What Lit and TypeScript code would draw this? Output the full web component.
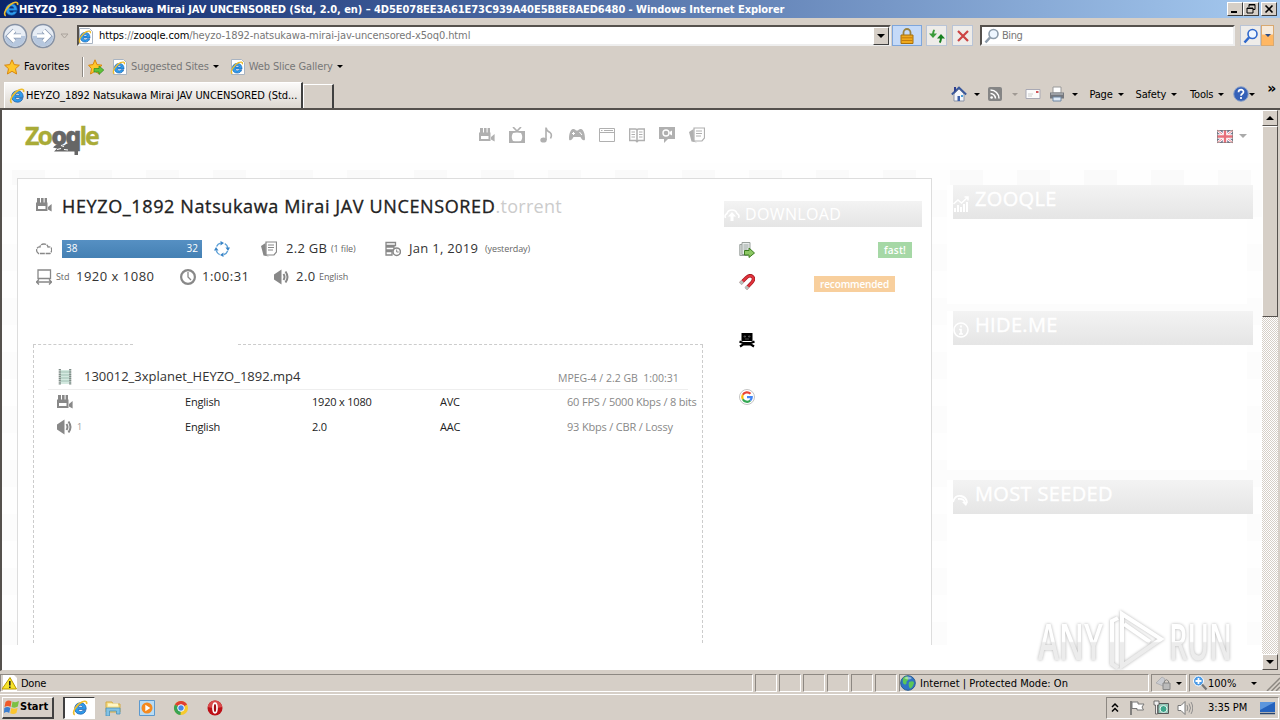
import { html, css, svg, LitElement, nothing } from 'lit';
import { customElement, property } from 'lit/decorators.js';

const ieLogo = svg`
  <path d="M14.200 9.400H6.300c.1 1.400 1 2.200 2.300 2.200 1 0 1.800-.5 2.200-1.200h3c-.8 2.500-2.800 3.800-5.300 3.800-3.600 0-5.800-2.400-5.800-5.700S5 2.800 8.500 2.800c3.600 0 5.800 2.500 5.700 6.600zM6.400 7.200h4.400c-.2-1.200-1-1.900-2.200-1.900s-2 .7-2.200 1.900z" fill="#2f9cec" stroke="#1457a8" stroke-width=".7"/>
  <path d="M2.800 14.800C-.8 13.500 4.300 4.500 10 2c3-1.300 5.400-.9 4.500 1.900" fill="none" stroke="#eebd2c" stroke-width="1.600"/>`;

const camera = svg`
  <path d="M1 1h3v5H1zM5 1h2.600v5H5zM8.600 1H11v5H8.600z" fill="currentColor"/>
  <path d="M0 5.500h11.500V14H0zM2 9v3h7.500V9z" fill="currentColor" fill-rule="evenodd"/>
  <path d="M12 10l3.600-3v7.500L12 12.500z" fill="currentColor"/>`;

const papers = svg`
  <path d="M5 1h10.500v10l-2.500 3H5z" fill="#fff" stroke="currentColor" stroke-width="1.200"/>
  <path d="M7 4h6M7 6.500h6M7 9h5" stroke="currentColor"/>
  <path d="M4.500 2L0 5l2.500 9.500L8 15.500l-3-1.500z" fill="currentColor"/>`;

const speaker = svg`
  <path d="M0 5.500L7.500.5v15L0 10.500z" fill="currentColor"/>
  <path d="M9.500 5q2 3 0 6M11.500 2.500q4 5.500 0 11" fill="none" stroke="currentColor" stroke-width="2"/>`;

const icons: Record<string, unknown> = {
  ie: ieLogo,
  iePage: svg`<path d="M1.500.5h10l3 3v12h-13z" fill="#fff" stroke="#a9b4c2"/><g transform="translate(0 2) scale(.85)">${ieLogo}</g>`,
  star: svg`<path d="M8 .8l2.200 4.800 5.200.6-3.900 3.500 1.100 5.300L8 12.300 3.400 15l1.100-5.300L.6 6.200l5.200-.6z" fill="#ffc62a" stroke="#d9870e"/>`,
  starAdd: svg`<path d="M7 .8l2 4.800 5 .6-3.700 3.500 1 5.300L7 12.300 2.500 15l1-5.300L.6 6.200l4.400-.6z" fill="#ffc62a" stroke="#d9870e"/><path d="M6 9.500h5V7l4.800 4-4.800 4.500v-2.500H6z" fill="#5fc238" stroke="#2f8a1f" stroke-width=".7"/>`,
  lock: svg`<path d="M4.500 8V4.500a3.500 3.500 0 0 1 7 0V8" fill="none" stroke="#9a8341" stroke-width="1.800"/><path d="M2 7h12v8.500H2z" fill="#efa91d" stroke="#a7700e"/><path d="M2.500 9.800h11M2.500 12.500h11" stroke="#c47c0c"/>`,
  refresh: svg`<path d="M5.500 2Q4 3 4 8" fill="none" stroke="#3a9b3a" stroke-width="2"/><path d="M0 5.500h8L4 10z" fill="#3a9b3a"/><path d="M10.500 14.500q1.500-1 1.500-6" fill="none" stroke="#17801f" stroke-width="2"/><path d="M8 10.500h8L12 6z" fill="#17801f"/>`,
  stop: svg`<path d="M3 3l10 10M13 3L3 13" stroke="#cc4444" stroke-width="2.200"/>`,
  find: svg`<circle cx="9.500" cy="6" r="4.500" fill="#eef6ff" stroke="currentColor" stroke-width="1.600"/><path d="M6 9.500L1.500 14.500" stroke="currentColor" stroke-width="2.600"/>`,
  home: svg`<path d="M3 8v7h10V8L8 3z" fill="#f4f6fa" stroke="#8b94a8"/><path d="M.8 8.500L8 1.500l7.200 7" fill="none" stroke="#39589c" stroke-width="1.800"/><path d="M3 1h2v3.500L3 6z" fill="#2f3f8e"/><path d="M6.500 10H9v5H6.500z" fill="#3c5fa8"/><path d="M10 9h2v2h-2z" fill="#4aa0d8"/>`,
  rss: svg`<rect x="1" y="1" width="14" height="14" rx="2" fill="#858585"/><circle cx="4.600" cy="11.500" r="1.300" fill="#fff"/><path d="M3.500 7.500a5 5 0 0 1 5 5M3.500 4a8.500 8.500 0 0 1 8.500 8.500" fill="none" stroke="#fff" stroke-width="1.500"/>`,
  mail: svg`<path d="M1 3.500h14v9H1z" fill="#fbfbfb" stroke="#a9a9b4"/><path d="M11 5h2.500v2H11z" fill="#d0565a"/><path d="M3 8h5M3 10h4" stroke="#ccc"/>`,
  printer: svg`<path d="M4 1h8v6H4z" fill="#fff" stroke="#999"/><path d="M1 6.500h14v6H1z" fill="#75787e"/><path d="M2 8h12" stroke="#c5c8cc"/><path d="M4 11h8v4H4z" fill="#dfeaf6" stroke="#6e87a3"/>`,
  help: svg`<circle cx="8" cy="8" r="7.300" fill="#3561b8" stroke="#8ea3c8"/><path d="M5.500 6.200C5.600 2.800 10.700 3 10.500 6c-.1 1.800-2.500 1.800-2.500 3.700M8 11v2" fill="none" stroke="#fff" stroke-width="1.700"/>`,
  camera,
  papers,
  speaker,
  tv: svg`<path d="M4 0l4 4 4-4" fill="none" stroke="currentColor" stroke-width="1.600"/><path d="M0 4h16v12H0zM4 6Q1.500 10 4 14q4 .6 8 0 2.500-4 0-8-4-.8-8 0z" fill="currentColor" fill-rule="evenodd"/>`,
  music: svg`<ellipse cx="4.500" cy="13" rx="3.200" ry="2.600" fill="currentColor"/><path d="M7 13V.5q.5 3.500 4 5 2.500 2 .5 6" fill="none" stroke="currentColor" stroke-width="1.600"/>`,
  gamepad: svg`<path d="M4 2q2-.5 3 1.500h2Q10 1.500 12 2c3 .5 4.500 7 3.800 11-2 1-3.300-1-4.300-3h-7c-1 2-2.500 4-4.300 3C-.5 9 1 2.500 4 2z" fill="currentColor"/><path d="M3 6.500h3M4.500 5v3M10.500 5l2.500 3" stroke="#fff"/>`,
  window: svg`<path d="M.5 1.500h15v13H.5zM.5 5.500h15M2 3.500h1.500M5 3.500h9" fill="none" stroke="currentColor"/>`,
  book: svg`<path d="M.6 2h5.900Q8 2 8 3.500 8 2 9.500 2h5.900v11.500h-6L8 14.800l-1.400-1.300h-6zM8 3v11" fill="none" stroke="currentColor" stroke-width="1.500"/><path d="M2.500 5H6M2.500 7.500H6M2.500 10H6M10 5h3.500M10 7.500h3.500M10 10h3.500" stroke="currentColor"/>`,
  chat: svg`<path d="M0 0h16v12H9l-4 4v-4H0z" fill="currentColor"/><circle cx="7" cy="6" r="3" fill="none" stroke="#fff" stroke-width="1.400"/><path d="M10.500 5l2.500-1.500v5l-2.500-1.500z" fill="#fff"/>`,
  flag: svg`<path d="M0 2h16v13H0z" fill="#6f7292"/><path d="M0 2l16 13M16 2L0 15" stroke="#fff" stroke-width="2.800"/><path d="M0 2l16 13M16 2L0 15" stroke="#e97d87"/><path d="M8 2v13M0 8.500h16" stroke="#fff" stroke-width="4.500"/><path d="M8 2v13M0 8.500h16" stroke="#e8707b" stroke-width="2.400"/><path d="M.5 2.500h15v12H.5z" fill="none" stroke="#777" stroke-opacity=".6"/>`,
  cloud: svg`<path d="M2.500 12.500Q-.3 10.500 1 7.500 2 5.500 4 6q.5-3 4-3 3.300 0 4 3 3-.5 3.500 1.500.7 3-1.500 5z" fill="none" stroke="currentColor" stroke-width="1.300" stroke-dasharray="5 .8"/>`,
  cycle: svg`<circle cx="8" cy="8" r="6" fill="none" stroke="#5b9fd6" stroke-width="1.400" stroke-dasharray="5 4.420" stroke-dashoffset="-2.200"/><path d="M6.500 0L10 2 6.500 4.500zM16 6.500L14 10l-2.500-3.500zM9.500 16L6 14l3.500-2.500zM0 9.500L2 6l2.500 3.500z" fill="#3984c6"/>`,
  resolution: svg`<path d="M2 1h12.500v8.500H2zM0 13h16M3 10.500L.5 13 3 15.500M13 10.500l2.500 2.500-2.500 2.500" fill="none" stroke="currentColor" stroke-width="1.300"/>`,
  clock: svg`<circle cx="8" cy="8" r="6.900" fill="#fff" stroke="currentColor" stroke-width="2.200"/><path d="M8 3v5l3 3" fill="none" stroke="currentColor" stroke-width="1.300"/>`,
  dated: svg`<path d="M1 1.500h9.500v3H1zM1 6h8v3H1zM1 10.500h6v3.500H1z" fill="none" stroke="currentColor" stroke-width="1.300"/><circle cx="11.700" cy="10.700" r="3.700" fill="#fff" stroke="currentColor" stroke-width="1.500"/><path d="M11.700 8.500v2.500h2" fill="none" stroke="currentColor"/>`,
  film: svg`<path d="M3 1h11v14H3z" fill="#d4e9e0"/><path d="M2.800 0v16M13.200 0v16" stroke="#7e8b86" stroke-width="2.200" stroke-dasharray="1.600 .6"/><path d="M4 3h8M4 6h8M4 9h8M4 12h8" stroke="#9fc0b3"/>`,
  upload: svg`<path d="M1.500 12Q0 9 3 7.500 4 4 8 4t5 3.500q3 1.500 1.500 4.500" fill="none" stroke="#fff" stroke-width="1.600"/><path d="M8 6l4 4.500H9.500V15h-3v-4.500H4z" fill="#fff"/>`,
  file: svg`<path d="M.8 2.500h8v11h-8z" fill="#d8dcda" stroke="#99a09c"/><path d="M3 .5h8v12H3z" fill="#e9eceb" stroke="#9aa19d"/><path d="M4.500 3h5M4.500 5h5M4.500 7h4" stroke="#9aa5a0"/><path d="M5.500 8.500H10V6l5.500 5-5.500 4.500V13H5.500z" fill="#8cc763" stroke="#3c7d21"/>`,
  magnet: svg`<path d="M1.500 9.500L7.500 3.500q3.500-3.200 6-.8 2.300 2.500-.8 6l-5.700 6" fill="none" stroke="#a3161d" stroke-width="3.400"/><path d="M1.500 9.500L7.500 3.500q3.500-3.200 6-.8 2.300 2.500-.8 6l-5.700 6" fill="none" stroke="#e2343d" stroke-width="2"/><path d="M1.200 9.800l2.500-2.500M6.700 15l2.300-2.400" stroke="#b9c1bd" stroke-width="3.400"/>`,
  pirate: svg`<path d="M2.500 1h11v8h-11z" fill="#000"/><path d="M5 4h1.500v1H5zM9.500 4H11v1H9.500zM6 7h4" stroke="#777" stroke-width=".6"/><path d="M.5 9.500L4 11h8l3.500-1.500M1 14.500l3-2h8l3 2" fill="none" stroke="#000" stroke-width="2.200"/>`,
  google: svg`<circle cx="8" cy="8" r="7.500" fill="#fff" stroke="#c5c5c5"/><g fill="none" stroke-width="2.200"><path d="M11.500 4.800A4.800 4.800 0 0 0 3.800 5.800" stroke="#ea4335"/><path d="M3.800 5.800a4.800 4.800 0 0 0 0 4.400" stroke="#fbbc05"/><path d="M3.800 10.200a4.800 4.800 0 0 0 7.500 1.300" stroke="#34a853"/><path d="M11.300 11.500Q12.700 10 12.700 8.200H8" stroke="#4285f4"/></g>`,
  chart: svg`<path d="M.5 8L5 4l3.500 3L15 1M11.500 1H15v3.500" fill="none" stroke="#fff" stroke-width="1.500"/><path d="M2 16v-4M5 16V9M8 16v-5M11 16V8M14 16V6" stroke="#fff" stroke-width="2"/>`,
  info: svg`<circle cx="8" cy="8" r="7" fill="none" stroke="#fff" stroke-width="1.600"/><path d="M8 3.500v2M6 7.500h2V12M6 12h4" fill="none" stroke="#fff" stroke-width="1.700"/>`,
  trend: svg`<path d="M0 11Q2 4 8 5q5 1 6 6M5 8q6-1 7 4" fill="none" stroke="#fff" stroke-width="1.800"/><path d="M9 11h6l-2 4z" fill="#fff"/>`,
  warning: svg`<path d="M1 0h11l3 3v13H1z" fill="#fff"/><path d="M8 2.500l6.500 11.500H0z" fill="#f7e32a" stroke="#ba9800"/><path d="M7.800 6v4.500M7.800 11.500V13" stroke="#222" stroke-width="1.600"/>`,
  globe: svg`<circle cx="8" cy="8" r="7.300" fill="#2f74c4" stroke="#275c94"/><path d="M3 3Q7 0 8 2.500 9 5 6.500 6.500 7 10 4.500 9.500 2 8.500 3 3zM9 7q5-2 5 1-1.500 5-4 5.500Q8 11 9 7z" fill="#5bc656"/><path d="M4 3q4-3 8 0-3 3-8 0z" fill="#fff" fill-opacity=".45"/>`,
  protect: svg`<path d="M0 8l6-6 3 2-2 7z" fill="#c9cbd0" stroke="#a5a6aa" stroke-width=".7"/><path d="M7 8h7v6.500H7z" fill="#bbb" stroke="#888"/><path d="M8.500 8V6q2-2.500 4 0v2" fill="none" stroke="#888"/>`,
  zoomIn: svg`<circle cx="6.500" cy="6" r="5" fill="#4c9be6" stroke="#fff"/><path d="M6.500 3v6M3.500 6h6" stroke="#fff" stroke-width="1.800"/><path d="M10 9.500l4.500 5" stroke="#777" stroke-width="2.200"/>`,
  windows: svg`<path d="M1.500 3Q4.500.5 7.500 2.500L6.500 8Q4 6 .5 8z" fill="#ef5a2a"/><path d="M8.500 2.500q3 1.500 6.500-.5l-1.200 5.500Q11 9.500 7.500 8z" fill="#7cc043"/><path d="M.3 9q3.200-2 6 0L5.200 14q-2.500-2-5.200 0z" fill="#3b7ed0"/><path d="M7.300 9q3 1.500 6.300 0l-1.200 5q-3 2-6.200.3z" fill="#fbc52d"/>`,
  explorer: svg`<path d="M1 2h6l1 2h7v8H1z" fill="#f6dd83" stroke="#d3aa45"/><path d="M3 3.500h10v3H3z" fill="#fff6c5"/><path d="M1 8h14v6h-3.500v-3h-7v5H1z" fill="#82c2e4" stroke="#4a93bd" stroke-width=".8"/>`,
  player: svg`<path d="M.5.500h15v15H.5z" fill="#b9dcf4" stroke="#5c99ce"/><circle cx="8" cy="8" r="5.500" fill="#f58a1f"/><path d="M6.300 4.800v6.400l5-3.200z" fill="#fff"/>`,
  chrome: svg`<circle cx="8" cy="8" r="7" fill="#f7ca2c"/><path d="M8 8L1.900 4.500a7 7 0 0 1 12.200 0z" fill="#df3f33"/><path d="M8 8L1.900 4.500A7 7 0 0 0 7.500 15z" fill="#39a352"/><circle cx="8" cy="8" r="3.300" fill="#4688e8" stroke="#fff"/>`,
  opera: svg`<circle cx="8" cy="8" r="7.500" fill="#bd1017"/><path d="M8 .5A7.500 7.500 0 0 1 15.300 7Q8 9 .7 7A7.500 7.500 0 0 1 8 .5z" fill="#d84b4b"/><ellipse cx="8" cy="8" rx="2" ry="4.800" fill="#a00c12" stroke="#fff" stroke-width="1.700"/>`,
  pennant: svg`<path d="M2 1v14" stroke="#666" stroke-width="1.500"/><path d="M3 2h6v2h6l-2 3 1.500 3H8V8.500H3z" fill="#fff" stroke="#777"/>`,
  network: svg`<path d="M5 3.500h10.500v10H5z" fill="#8fc4b5" stroke="#555"/><circle cx="10.500" cy="9" r="3.500" fill="#3ca58a" stroke="#e6f3ee"/><path d="M1 1h5v4H4.500v9H2.500V5H1z" fill="#eee" stroke="#555" stroke-width=".8"/>`,
  volume: svg`<path d="M1 5.500h3l4-4v13l-4-4H1z" fill="#fff" stroke="#777"/><path d="M10 5q1.500 3 0 6M12 3.500q3 4.500 0 9M14 2q3.500 6 0 12" fill="none" stroke="#888" stroke-width=".9"/>`,
  desktop: svg`<path d="M1 2h15v10H1z" fill="#2462bd"/><path d="M1 2h15L1 10z" fill="#5c96dd"/><path d="M1 13.500h15" stroke="#27446f" stroke-width="1.500"/>`,
  chevrons: svg`<path d="M5 7l3-3 3 3M5 11.500l3-3 3 3" fill="none" stroke="#000" stroke-width="1.500"/>`,
};

@customElement('ui-icon')
export class UiIcon extends LitElement {

  static styles = [css`
    :host {
      display: block;
      flex: none;
      width: 16px;
      height: 16px;
    }

    svg {
      display: block;
      width: 100%;
      height: 100%;
    }
  `]

  @property({ type: String })
  name = 'ie';

  render() {
    return html`<svg viewBox="0 0 16 16">${icons[this.name]}</svg>`;
  }
}

@customElement('browser-chrome')
export class BrowserChrome extends LitElement {

  static styles = [css`
    :host {
      display: block;
      height: 110px;
      box-sizing: border-box;
      border-bottom: 2px solid #55514d;
      background: #d6cfc7;
      color: #000;
      font: 11px/14px "DejaVu Sans Condensed", "DejaVu Sans", sans-serif;
      font-stretch: condensed;
      letter-spacing: -.3px;
      white-space: nowrap;
    }

    .row {
      display: flex;
      align-items: center;
    }

    .title {
      height: 18px;
      padding: 0 3px;
      background: linear-gradient(to right, #0a246a, #a6caf0);
      color: #fff;
      font-weight: bold;
      letter-spacing: -.05px;
    }

    .title span {
      flex: 1;
      margin-left: 0;
      padding-top: 1px;
    }

    .button {
      box-sizing: border-box;
      width: 16px;
      height: 14px;
      border: 1px solid;
      border-color: #fff #404040 #404040 #fff;
      background: #d6cfc7;
    }

    .button.close {
      margin-left: 2px;
    }

    .button svg {
      display: block;
    }

    .address {
      height: 35px;
    }

    .nav {
      width: 26px;
      height: 26px;
      margin-left: 2px;
    }

    .caret {
      width: 0;
      height: 0;
      border: 3px solid transparent;
      border-top-color: #000;
      border-bottom: 0;
    }

    .caret.dim {
      border-top-color: #a09a94;
    }

    .field {
      display: flex;
      align-items: center;
      box-sizing: border-box;
      height: 21px;
      border: 2px solid;
      border-color: #55514d #eee #eee #55514d;
      background: #fff;
      color: #777;
    }

    .url {
      width: 814px;
      margin-left: 7px;
    }

    .url ui-icon {
      margin-left: -1px;
    }

    .url span {
      flex: 1;
      margin: 1px 0 0 5px;
      letter-spacing: -.11px;
    }

    .url b {
      color: #000;
      font-weight: normal;
    }

    .drop {
      display: flex;
      align-items: center;
      justify-content: center;
      width: 14px;
      height: 16px;
      border: 1px solid;
      border-color: #fff #404040 #404040 #fff;
      background: #d6cfc7;
    }

    .drop .caret {
      border-width: 4px 4px 0;
    }

    .tool {
      display: flex;
      align-items: center;
      justify-content: center;
      box-sizing: border-box;
      width: 21px;
      height: 21px;
      border: 1px solid #b9c4d6;
      background: #eeece9;
    }

    .tool.locked {
      width: 30px;
      margin: 0 4px 0 1px;
      border-color: #7ea6dc;
      background: #c5daf8;
    }

    .tool.stop {
      margin-left: 5px;
    }

    .search {
      width: 255px;
      margin-left: 7px;
      letter-spacing: -.45px;
    }

    .search ui-icon {
      margin: 0 2px 0 2px;
      color: #8d9cab;
    }

    .tool.go {
      margin-left: 5px;
      color: #2f68cc;
    }

    .tool.more {
      width: 13px;
      border-color: #d9a970;
      background: linear-gradient(#f6eadb 40%, #ffb763 50%);
    }

    .tool.more .caret {
      border-top-color: #2d4d86;
    }

    .favorites {
      height: 27px;
      padding-left: 4px;
      color: #777;
    }

    .favorites .label {
      width: 63px;
      margin-left: 4px;
      color: #000;
      letter-spacing: .1px;
    }

    .divider {
      width: 1px;
      height: 20px;
      margin: 0 4px 0 -5px;
      background: #8d8882;
      border-right: 1px solid #fff;
    }

    .link {
      margin: 1px 4px 0 3px;
      letter-spacing: -.14px;
    }

    .favorites .caret + ui-icon {
      margin-left: 11px;
    }

    .favorites ui-icon + ui-icon {
      margin-left: 8px;
    }

    .tabs {
      height: 28px;
      align-items: flex-end;
    }

    .tab {
      display: flex;
      align-items: center;
      box-sizing: border-box;
      width: 299px;
      height: 26px;
      margin-left: 4px;
      padding-left: 4px;
      border: 1px solid #fff;
      border-right: 2px solid #404040;
      border-bottom: 0;
      background: linear-gradient(#fbfaf9, #dcd7d1);
    }

    .tab span {
      margin-left: 1px;
      letter-spacing: -.06px;
    }

    .tab.empty {
      width: 31px;
      height: 24px;
      margin-left: 0;
      background: none;
    }

    .commands {
      display: flex;
      align-items: center;
      height: 28px;
      margin-left: auto;
    }

    .menu {
      margin: 1px 5px 0 0;
      letter-spacing: -.2px;
    }

    .overflow {
      margin: -13px 4px 0 12px;
      font: bold 14px/14px "DejaVu Sans", sans-serif;
    }

    .home { margin-right: 7px; }
    .rss { margin: 0 9px 0 7px; }
    .mail { margin: 0 8px 0 7px; }
    .printer { margin-right: 7px; }
    .page { margin-left: 11px; }
    .safety { margin-left: 12px; }
    .tools { margin-left: 13px; }
    .help { margin-left: 9px; }
  `]

  navArrow(path: string) {
    return html`
      <svg class="nav" viewBox="0 0 26 26">
        <circle cx="13" cy="13" r="11.500" fill="#e6ecf4" stroke="#8591a4" stroke-width="1.500"/>
        <path d="M2.500 13a10.500 10.500 0 0 0 21 0z" fill="#b6c7de"/>
        <path d=${path} fill="none" stroke="#8b9cb5" stroke-width="5"/>
        <path d=${path} fill="none" stroke="#fff" stroke-width="3.400"/>
      </svg>`;
  }

  render() {
    return html`
      <div class="row title">
        <ui-icon name="ie"></ui-icon>
        <span>HEYZO_1892 Natsukawa Mirai JAV UNCENSORED (Std, 2.0, en) – 4D5E078EE3A61E73C939A40E5B8E8AED6480 - Windows Internet Explorer</span>
        <div class="button"><svg viewBox="0 0 14 12"><path d="M3 9h6" stroke="#000" stroke-width="2"/></svg></div>
        <div class="button"><svg viewBox="0 0 14 12"><path d="M5 4V1.500h6v5H9M3 5h6v5H3zM3 5.500h6M5 2h6" fill="none" stroke="#000"/></svg></div>
        <div class="button close"><svg viewBox="0 0 14 12"><path d="M3.500 2.500l7 7M10.500 2.500l-7 7" stroke="#000" stroke-width="1.600"/></svg></div>
      </div>
      <div class="row address">
        ${this.navArrow('M19 13H8M12.500 7.500L7 13l5.500 5.500')}
        ${this.navArrow('M7 13h11M13.500 7.500L19 13l-5.500 5.500')}
        <svg width="14" height="14" viewBox="0 0 14 14"><path d="M5 5h7l-3.500 4z" fill="none" stroke="#aaa39c"/></svg>
        <div class="field url">
          <ui-icon name="iePage"></ui-icon>
          <span><b>https</b>://<b>zooqle.com</b>/heyzo-1892-natsukawa-mirai-jav-uncensored-x5oq0.html</span>
          <div class="drop"><div class="caret"></div></div>
        </div>
        <div class="tool locked"><ui-icon name="lock"></ui-icon></div>
        <div class="tool"><ui-icon name="refresh"></ui-icon></div>
        <div class="tool stop"><ui-icon name="stop"></ui-icon></div>
        <div class="field search"><ui-icon name="find"></ui-icon>Bing</div>
        <div class="tool go"><ui-icon name="find"></ui-icon></div>
        <div class="tool more"><div class="caret"></div></div>
      </div>
      <div class="row favorites">
        <ui-icon name="star"></ui-icon>
        <span class="label">Favorites</span>
        <div class="divider"></div>
        <ui-icon name="starAdd"></ui-icon>
        <ui-icon name="iePage"></ui-icon>
        <span class="link">Suggested Sites</span>
        <div class="caret"></div>
        <ui-icon name="iePage"></ui-icon>
        <span class="link">Web Slice Gallery</span>
        <div class="caret"></div>
      </div>
      <div class="row tabs">
        <div class="tab"><ui-icon name="ie"></ui-icon><span>HEYZO_1892 Natsukawa Mirai JAV UNCENSORED (Std...</span></div>
        <div class="tab empty"></div>
        <div class="commands">
          <ui-icon class="home" name="home"></ui-icon><div class="caret"></div>
          <ui-icon class="rss" name="rss"></ui-icon><div class="caret dim"></div>
          <ui-icon class="mail" name="mail"></ui-icon>
          <ui-icon class="printer" name="printer"></ui-icon><div class="caret"></div>
          <span class="menu page">Page</span><div class="caret"></div>
          <span class="menu safety">Safety</span><div class="caret"></div>
          <span class="menu tools">Tools</span><div class="caret"></div>
          <ui-icon class="help" name="help"></ui-icon><div class="caret"></div>
          <span class="overflow">»</span>
        </div>
      </div>
    `
  }
}

@customElement('torrent-page')
export class TorrentPage extends LitElement {

  static styles = [css`
    :host {
      display: block;
      flex: 1;
      background: #fff;
      color: #333;
      font: 11px/16px "Open Sans", "Noto Sans", sans-serif;
      white-space: nowrap;
    }

    .header {
      display: flex;
      height: 53px;
      color: #b0b0b0;
    }

    .logo {
      position: relative;
      width: 75px;
      height: 40px;
      margin: 9px 0 0 23px;
      color: #a9ab37;
      font: bold 25px/33px "Open Sans", sans-serif;
      letter-spacing: -1.900px;
      -webkit-text-stroke: .3px;
    }

    .logo b {
      color: #666;
    }

    .whiskers {
      position: absolute;
      left: 27px;
      top: 22px;
      width: 28px;
      height: 15px;
    }

    .categories {
      display: flex;
      gap: 14px;
      margin: 17px 0 0 379px;
    }

    .language {
      display: flex;
      align-items: center;
      gap: 6px;
      height: 16px;
      margin: 18px 15px 0 auto;
    }

    .caret {
      border: 4px solid transparent;
      border-top-color: #aaa;
      border-bottom: 0;
    }

    .body {
      display: flex;
      height: 482px;
      background-color: #fcfcfc;
      background-image:
        linear-gradient(90deg, #fafafa 50%, transparent 50%),
        linear-gradient(#fefefe 50%, transparent 50%);
      background-size: 67px 15px, 61px 54px;
      background-position: 10px 7px, 0 0;
      background-repeat: repeat-x, repeat;
    }

    .torrent {
      display: flex;
      box-sizing: border-box;
      width: 915px;
      margin: 15px 0 0 15px;
      border: 1px solid #ddd;
      border-bottom: 0;
      background: #fff;
    }

    .details {
      width: 670px;
      padding-left: 15px;
    }

    .name {
      display: flex;
      align-items: center;
      height: 24px;
      margin: 15px 0 0 3px;
      color: #222;
      font: 18px/24px "Open Sans", sans-serif;
      letter-spacing: .63px;
      -webkit-text-stroke: .35px;
    }

    .name ui-icon {
      margin: -2px 10px 0 0;
      color: #888;
    }

    .name small {
      color: #ccc;
      font-size: 18px;
      letter-spacing: .3px;
      -webkit-text-stroke: 0;
    }

    .meta {
      display: grid;
      align-items: center;
      height: 28px;
      margin-left: 3px;
      color: #888;
    }

    .meta.swarm {
      grid-template-columns: 25px 152px 47px 25px 45px 54px 24px 76px auto;
      column-gap: 0;
      padding-left: 0;
      margin-top: 17px;
    }

    .meta.swarm {
      grid-template-columns: 26px 152px 47px 25px 45px 54px 24px 76px auto;
    }

    .meta.media {
      grid-template-columns: 20px 20px 104px 22px 72px 22px 23px auto;
    }

    .meta b {
      margin-top: -2px;
      color: #333;
      font-weight: normal;
      font-size: 13px;
      letter-spacing: .3px;
    }

    .meta.media b {
      letter-spacing: .5px;
    }

    .meta small {
      font-size: 9px;
      color: #666;
      letter-spacing: -.1px;
    }

    .peers {
      display: flex;
      justify-content: space-between;
      box-sizing: border-box;
      width: 140px;
      height: 18px;
      padding: 0 4px;
      background: linear-gradient(#5690c3, #4480b3);
      color: #fff;
      font-size: 10px;
      line-height: 17px;
    }

    .edge {
      display: flex;
      justify-content: space-between;
      height: 1px;
      margin-top: 53px;
    }

    .edge i {
      border-top: 1px dashed #ccc;
    }

    .edge i:first-child { width: 100px; }
    .edge i:last-child { width: 465px; }

    .list {
      box-sizing: border-box;
      width: 670px;
      height: 298px;
      padding: 19px 0 0 14px;
      border: dashed #ccc;
      border-width: 0 1px;
    }

    .file {
      display: grid;
      grid-template-columns: 27px 474px auto;
      align-items: center;
      width: 631px;
      height: 25px;
      padding-left: 9px;
      border-bottom: 1px solid #eee;
      color: #888;
    }

    .file b {
      margin-top: -1px;
      color: #333;
      font-weight: normal;
      font-size: 13px;
    }

    .file span {
      margin-top: 2px;
      font-size: 10.500px;
    }

    .track {
      display: grid;
      grid-template-columns: 20px 108px 127px 128px 127px auto;
      align-items: center;
      height: 25px;
      margin-top: -1px;
      padding-left: 9px;
      color: #222;
      letter-spacing: -.2px;
    }

    .track + .track {
      margin-top: 0;
    }

    .track ui-icon {
      color: #888;
    }

    .track small {
      color: #999;
      font-size: 9px;
    }

    .track span:last-child {
      color: #888;
      letter-spacing: -.18px;
    }

    .download {
      width: 198px;
      margin: 22px 0 0 21px;
    }

    .heading {
      display: flex;
      align-items: center;
      height: 26px;
      background: linear-gradient(#f3f3f3, #e5e5e5);
      color: #fff;
      font: 16px/26px "Open Sans", sans-serif;
    }

    .heading span {
      margin-left: 5px;
      letter-spacing: .35px;
    }

    .option {
      display: flex;
      align-items: center;
      justify-content: space-between;
      height: 16px;
      padding-left: 15px;
    }

    .direct { margin-top: 15px; padding-right: 10px; }
    .magnet { margin-top: 18px; padding-right: 27px; }
    .pirate { margin-top: 40px; }
    .google { margin-top: 41px; }

    .magnet ui-icon {
      margin-top: -4px;
    }

    .badge {
      height: 16px;
      padding: 0 6px;
      background: #a6d8a6;
      color: #fff;
      font: 600 10px/16px "Open Sans", sans-serif;
      letter-spacing: .2px;
    }

    .badge.warm {
      background: #f8cf9d;
      letter-spacing: -.15px;
    }

    .sidebar {
      width: 300px;
      margin-left: 15px;
    }

    .block {
      background: #fff;
    }

    .block:first-child { height: 119px; margin-top: 22px; }
    .block:nth-child(2) { height: 159px; margin-top: 7px; }
    .block:last-child { height: 165px; margin-top: 10px; }

    .block .heading {
      width: 300px;
      height: 34px;
      margin-left: 6px;
      font-size: 20px;
      line-height: 28px;
      align-items: flex-start;
      -webkit-text-stroke: .4px;
    }

    .block ui-icon {
      margin-top: 11px;
    }

    .block span {
      margin-left: 6px;
    }
  `]

  categories = ['camera', 'tv', 'music', 'gamepad', 'window', 'book', 'chat', 'papers'];

  blocks = [
    { icon: 'chart', title: 'ZOOQLE' },
    { icon: 'info', title: 'HIDE.ME' },
    { icon: 'trend', title: 'MOST SEEDED' },
  ];

  tracks = [
    { icon: 'camera', index: '', lang: 'English', format: '1920 x 1080', codec: 'AVC', info: '60 FPS / 5000 Kbps / 8 bits' },
    { icon: 'speaker', index: '1', lang: 'English', format: '2.0', codec: 'AAC', info: '93 Kbps / CBR / Lossy' },
  ];

  option(name: string, badge = '', warm = false) {
    return html`
      <ui-icon name=${name}></ui-icon>
      ${badge ? html`<span class="badge ${warm ? 'warm' : ''}">${badge}</span>` : nothing}`;
  }

  render() {
    return html`
      <div class="header">
        <div class="logo">Zo<b>oq</b>le
          <svg class="whiskers" viewBox="0 0 28 14">
            <path d="M1 6q5-6 11-2 5-4 14-3v12.500h-3.500V10H2l3-3z" fill="#666"/>
            <path d="M5 8l4-1M12 8l4 .5M9 4l3 1" stroke="#fff" stroke-width="1.200"/>
          </svg>
        </div>
        <div class="categories">${this.categories.map(name => html`<ui-icon name=${name}></ui-icon>`)}</div>
        <div class="language"><ui-icon name="flag"></ui-icon><div class="caret"></div></div>
      </div>
      <div class="body">
        <div class="torrent">
          <div class="details">
            <div class="name"><ui-icon name="camera"></ui-icon>HEYZO_1892 Natsukawa Mirai JAV UNCENSORED<small>.torrent</small></div>
            <div class="meta swarm">
              <ui-icon name="cloud"></ui-icon>
              <div class="peers"><span>38</span><span>32</span></div>
              <ui-icon name="cycle"></ui-icon>
              <ui-icon name="papers"></ui-icon><b>2.2 GB</b><small>(1 file)</small>
              <ui-icon name="dated"></ui-icon><b>Jan 1, 2019</b><small>(yesterday)</small>
            </div>
            <div class="meta media">
              <ui-icon name="resolution"></ui-icon><small>Std</small><b>1920 x 1080</b>
              <ui-icon name="clock"></ui-icon><b>1:00:31</b>
              <ui-icon name="speaker"></ui-icon><b>2.0</b><small>English</small>
            </div>
            <div class="files">
              <div class="edge"><i></i><i></i></div>
              <div class="list">
                <div class="file"><ui-icon name="film"></ui-icon><b>130012_3xplanet_HEYZO_1892.mp4</b><span>MPEG-4 / 2.2 GB&nbsp; 1:00:31</span></div>
                ${this.tracks.map(t => html`
                  <div class="track">
                    <ui-icon name=${t.icon}></ui-icon>
                    <small>${t.index}</small>
                    <span>${t.lang}</span>
                    <span>${t.format}</span>
                    <span>${t.codec}</span>
                    <span>${t.info}</span>
                  </div>`)}
              </div>
            </div>
          </div>
          <div class="download">
            <div class="heading"><ui-icon name="upload"></ui-icon><span>DOWNLOAD</span></div>
            <div class="option direct">${this.option('file', 'fast!')}</div>
            <div class="option magnet">${this.option('magnet', 'recommended', true)}</div>
            <div class="option pirate">${this.option('pirate')}</div>
            <div class="option google">${this.option('google')}</div>
          </div>
        </div>
        <div class="sidebar">
          ${this.blocks.map(b => html`
            <div class="block"><div class="heading"><ui-icon name=${b.icon}></ui-icon><span>${b.title}</span></div></div>`)}
        </div>
      </div>
    `
  }
}

@customElement('status-area')
export class StatusArea extends LitElement {

  static styles = [css`
    :host {
      display: block;
      height: 49px;
      background: #d6cfc7;
      color: #000;
      font: 11px/14px "DejaVu Sans Condensed", "DejaVu Sans", sans-serif;
      font-stretch: condensed;
      letter-spacing: -.25px;
      white-space: nowrap;
    }

    .status {
      display: flex;
      height: 20px;
      padding-top: 3px;
      border-bottom: 1px solid #fff;
    }

    .pane {
      display: flex;
      align-items: center;
      box-sizing: border-box;
      width: 22px;
      height: 18px;
      margin-right: 2px;
      border: 1px solid;
      border-color: #8d8882 #fff #fff #8d8882;
    }

    .pane span {
      padding-top: 1px;
    }

    .pane.message {
      width: 753px;
      padding-left: 1px;
    }

    .pane.message span {
      margin-left: 3px;
    }

    .pane.zone {
      width: 250px;
    }

    .pane.zone span {
      margin-left: 4px;
      letter-spacing: .04px;
    }

    .pane.protect {
      width: 36px;
      padding-left: 4px;
      gap: 4px;
    }

    .pane.zoom {
      flex: 1;
      padding-left: 2px;
      margin: 0;
      border-right: 0;
    }

    .pane.zoom span {
      margin: 0 15px 0 0;
      letter-spacing: 0;
    }

    .caret {
      border: 3px solid transparent;
      border-top-color: #000;
      border-bottom: 0;
    }

    .grip {
      width: 14px;
      height: 14px;
      margin: 2px 0 0 auto;
    }

    .taskbar {
      display: flex;
      align-items: center;
      height: 25px;
    }

    .start {
      display: flex;
      align-items: center;
      box-sizing: border-box;
      width: 52px;
      height: 22px;
      margin-left: 2px;
      padding-left: 1px;
      border: 1px solid;
      border-color: #fff #404040 #404040 #fff;
      border-right-width: 2px;
      border-bottom-width: 2px;
      font-weight: bold;
      letter-spacing: 0;
    }

    .active {
      display: flex;
      align-items: center;
      justify-content: center;
      box-sizing: border-box;
      width: 32px;
      height: 22px;
      margin: 0 10px 0 9px;
      border: 1px solid;
      border-color: #404040 #fff #fff #404040;
      border-left-width: 2px;
      background: #fff;
    }

    .pinned {
      display: flex;
      gap: 18px;
    }

    .tray {
      display: flex;
      align-items: center;
      box-sizing: border-box;
      width: 173px;
      height: 22px;
      margin: 0 1px 0 auto;
      border: 1px solid;
      border-color: #8d8882 #fff #fff #8d8882;
    }

    .tray ui-icon + ui-icon {
      margin-left: 8px;
    }

    .tray ui-icon:nth-child(2) {
      margin-left: 6px;
    }

    .tray span {
      width: 51px;
      margin-left: 15px;
      letter-spacing: -.1px;
    }
  `]

  render() {
    return html`
      <div class="status">
        <div class="pane message"><ui-icon name="warning"></ui-icon><span>Done</span></div>
        ${Array.from({ length: 6 }, () => html`<div class="pane"></div>`)}
        <div class="pane zone"><ui-icon name="globe"></ui-icon><span>Internet | Protected Mode: On</span></div>
        <div class="pane protect"><ui-icon name="protect"></ui-icon><div class="caret"></div></div>
        <div class="pane zoom">
          <ui-icon name="zoomIn"></ui-icon><span>100%</span><div class="caret"></div>
          <svg class="grip" viewBox="0 0 14 14"><path d="M1 14L14 1M5.500 14L14 5.500M10 14l4-4" stroke="#8d8882" stroke-width="1.500"/></svg>
        </div>
      </div>
      <div class="taskbar">
        <div class="start"><ui-icon name="windows"></ui-icon>Start</div>
        <div class="active"><ui-icon name="ie"></ui-icon></div>
        <div class="pinned">
          <ui-icon name="explorer"></ui-icon>
          <ui-icon name="player"></ui-icon>
          <ui-icon name="chrome"></ui-icon>
          <ui-icon name="opera"></ui-icon>
        </div>
        <div class="tray">
          <ui-icon name="chevrons"></ui-icon>
          <ui-icon name="pennant"></ui-icon>
          <ui-icon name="network"></ui-icon>
          <ui-icon name="volume"></ui-icon>
          <span>3:35 PM</span>
          <ui-icon name="desktop"></ui-icon>
        </div>
      </div>
    `
  }
}

@customElement('app-root')
export class AppRoot extends LitElement {

  static styles = [css`
    :host {
      position: relative;
      display: flex;
      flex-direction: column;
      width: 1280px;
      height: 720px;
      overflow: hidden;
      background: #fff;
    }

    .viewport {
      display: flex;
      flex: 1;
      min-height: 0;
      box-sizing: border-box;
      border-left: 2px solid #55514d;
      border-right: 2px solid #d6cfc7;
      border-bottom: 1px solid #d6cfc7;
    }

    .scrollbar {
      display: flex;
      flex-direction: column;
      width: 16px;
      background: repeating-conic-gradient(#fff 0 25%, #d6cfc7 0 50%) 0 0 / 2px 2px;
    }

    .arrow, .thumb {
      display: flex;
      align-items: center;
      justify-content: center;
      box-sizing: border-box;
      height: 16px;
      border: 1px solid;
      border-color: #fff #55514d #55514d #fff;
      background: #d6cfc7;
    }

    .thumb {
      height: 191px;
    }

    .arrow:last-child {
      margin-top: auto;
    }

    .watermark {
      position: absolute;
      left: 1034px;
      top: 602px;
      width: 204px;
      height: 80px;
      filter: drop-shadow(0 0 1.500px #b4b4b4);
    }

    .watermark text {
      font: 600 51px "Open Sans", sans-serif;
    }
  `]

  arrow(path: string) {
    return html`<div class="arrow"><svg width="8" height="4" viewBox="0 0 8 4"><path d=${path}/></svg></div>`;
  }

  render() {
    return html`
      <browser-chrome></browser-chrome>
      <div class="viewport">
        <torrent-page></torrent-page>
        <div class="scrollbar">
          ${this.arrow('M0 4l4-4 4 4z')}
          <div class="thumb"></div>
          ${this.arrow('M0 0h8L4 4z')}
        </div>
      </div>
      <status-area></status-area>
      <svg class="watermark" viewBox="0 -4 204 80">
        <defs>
          <linearGradient id="fade" gradientUnits="userSpaceOnUse" x1="0" y1="0" x2="0" y2="68">
            <stop offset=".52" stop-color="#fff"/>
            <stop offset=".54" stop-color="#ececec"/>
          </linearGradient>
        </defs>
        <g fill="url(#fade)">
          <text x="4" y="54" textLength="65" lengthAdjust="spacingAndGlyphs">ANY</text>
          <text x="135" y="54" textLength="63" lengthAdjust="spacingAndGlyphs">RUN</text>
        </g>
        <g fill="none" stroke="url(#fade)" stroke-width="4">
          <path d="M88 8l39 25-39 27z"/>
          <path d="M84 12l-6 3v43l6 4"/>
          <path d="M90 18l26 18"/>
        </g>
      </svg>
    `
  }
}
